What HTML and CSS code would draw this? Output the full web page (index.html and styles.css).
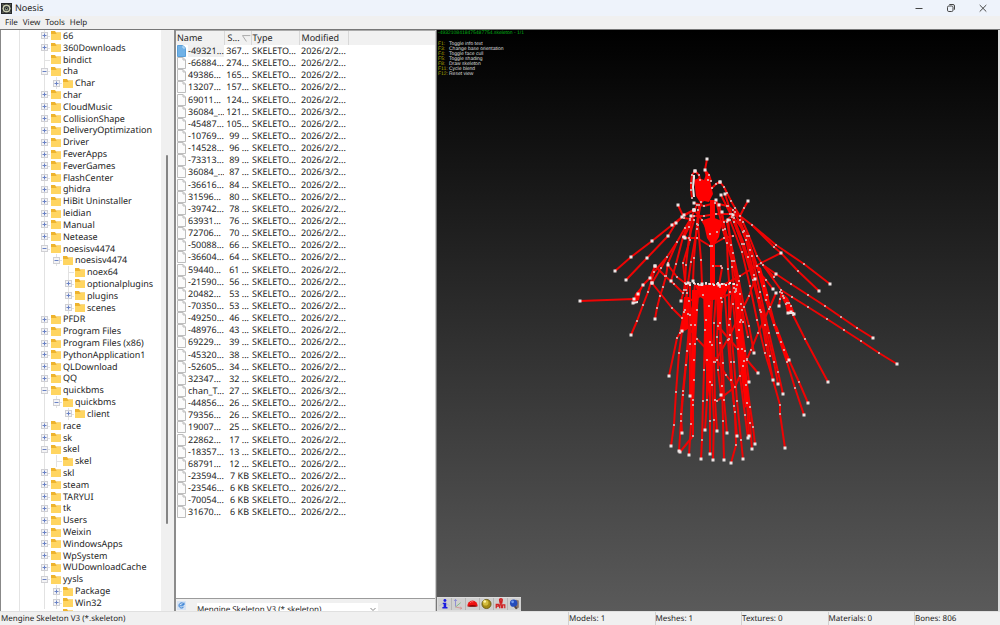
FILE: index.html
```html
<!DOCTYPE html>
<html lang="en">
<head>
<meta charset="utf-8">
<title>Noesis</title>
<link rel="stylesheet" href="styles.css">
</head>
<body>
<div class="window">
  <header class="titlebar">
    <svg class="app-icon" viewBox="0 0 12 12" aria-hidden="true"><rect width="12" height="12" fill="#25282a"/><path d="M1 2h2M9 2h2M1 10h2M9 10h2M1 6h1M10 6h1" stroke="#77786a"/><circle cx="6" cy="6" r="3.6" fill="#3c4144" stroke="#c9cdb0" stroke-width="1.5"/><circle cx="6" cy="6.5" r="1.7" fill="#9aa58c"/><circle cx="6" cy="6" r=".8" fill="#15181a"/></svg>
    <h1 class="title">Noesis</h1>
    <div class="controls">
      <button class="control" aria-label="Minimize"><svg viewBox="0 0 10 10"><path d="M1.500 5.500h7"/></svg></button>
      <button class="control" aria-label="Restore"><svg viewBox="0 0 10 10"><rect x="1.500" y="3" width="5.500" height="5.500" rx="1.300"/><path d="M3.300 1.500h3.700q1.500 0 1.500 1.500v3.700"/></svg></button>
      <button class="control" aria-label="Close"><svg viewBox="0 0 10 10"><path d="M1.700 2l6.600 6.600M8.300 2l-6.600 6.600"/></svg></button>
    </div>
  </header>
  <nav class="menu"><button>File</button><button>View</button><button>Tools</button><button>Help</button></nav>
  <main class="panes">
    <section class="folders">
      <ul class="tree" id="tree"></ul>
      <div class="scroll"><div class="thumb"></div></div>
    </section>
    <section class="files">
      <div class="list">
        <table class="table">
          <thead><tr><th class="c-name">Name</th><th class="c-size"><span class="sort">S...<svg viewBox="0 0 9 7"><path d="M8.500 .5h-8l4 6" /></svg></span></th><th class="c-type">Type</th><th class="c-date">Modified</th><th></th></tr></thead>
          <tbody id="rows"></tbody>
        </table>
      </div>
      <div class="filter">
        <button class="refresh" aria-label="Refresh"><svg viewBox="0 0 9 9"><path d="M6.800 5.800A2.600 2.600 0 1 1 7 3.500M7 1.500v2.200H4.500M2.500 4.800h4" /></svg></button>
        <select class="combo" aria-label="File type"><option>Mengine Skeleton V3 (*.skeleton)</option></select>
        <svg class="chevron" viewBox="0 0 6 6" aria-hidden="true"><path d="M.5 2l2.500 2.500L5.500 2"/></svg>
      </div>
    </section>
    <section class="view">
      <svg class="skeleton" id="skeleton" viewBox="437 30 561 581" role="img" aria-label="Skeleton preview"></svg>
      <div class="overlay">
        <p class="file">-4932108418475487754.skeleton - 1/1</p>
        <dl class="keys">
          <dt>F1:</dt><dd>Toggle info text</dd>
          <dt>F3:</dt><dd>Change base orientation</dd>
          <dt>F4:</dt><dd>Toggle face cull</dd>
          <dt>F5:</dt><dd>Toggle shading</dd>
          <dt>F8:</dt><dd>Draw skeleton</dd>
          <dt>F11:</dt><dd>Cycle blend</dd>
          <dt>F12:</dt><dd>Reset view</dd>
        </dl>
      </div>
      <div class="tools">
        <button aria-label="Info"><svg viewBox="0 0 14 14"><path d="M1 9q6-5 12 0" fill="none" stroke="#b5b8c5"/><g fill="#1c1ce0"><circle cx="7.500" cy="3" r="1.700"/><path d="M5 5.500h4v5h1.500v1.800h-6v-1.800h1.500v-3.500H5z"/></g></svg></button>
        <button aria-label="Axes"><svg viewBox="0 0 14 14" fill="none"><path d="M3.500 10V2M2 3.500L3.500 1.500 5 3.500" stroke="#8585d4"/><path d="M3.500 10.500l6-5" stroke="#77b878"/><path d="M3.500 10.500l7 1.500M9 10.500l2 1.500-2 1" stroke="#d49090"/></svg></button>
        <button aria-label="Culling"><svg viewBox="0 0 14 14"><path d="M1 9.500a6 6.500 0 0 1 12 0z" fill="#ed1111"/><path d="M1 9.500q6 1.500 12 0-6-2-12 0z" fill="#730000"/><path d="M4 5.500q2-2 4-1" stroke="#ff8080" fill="none"/></svg></button>
        <button aria-label="Shading"><svg viewBox="0 0 14 14"><circle cx="7" cy="7" r="5.300" fill="#a58b16" stroke="#655610"/><circle cx="6" cy="5.500" r="3.300" fill="#d4bd3e"/><circle cx="5" cy="4" r="1.500" fill="#fff3a8"/></svg></button>
        <button aria-label="Bones"><svg viewBox="0 0 14 14"><path d="M7.500 1v7M5.800 2q0-1.300 1.700-1.300T9.200 2L8.500 6h-2zM2 12V7.500h2.500v2H2M6 12V8h2v4M9.500 12V8h2.500v4" fill="none" stroke="#cf2022" stroke-width="1.400"/></svg></button>
        <button aria-label="Blend"><svg viewBox="0 0 14 14"><path d="M9 2l3 1v8l-3 2-3-3z" fill="#8b7467"/><circle cx="6" cy="6" r="4.300" fill="#254cbb"/><circle cx="4.800" cy="4.500" r="1.600" fill="#739ced"/><path d="M7.500 10l2 2.500" stroke="#554740" stroke-width="2"/></svg></button>
      </div>
    </section>
  </main>
  <footer class="status"><span>Mengine Skeleton V3 (*.skeleton)</span><span>Models: 1</span><span>Meshes: 1</span><span>Textures: 0</span><span>Materials: 0</span><span>Bones: 806</span></footer>
</div>
<script src="script.js"></script>
</body>
</html>
```
FILE: styles.css
```css
* { box-sizing: border-box; }
body { margin: 0; font: 9px/12px "Noto Sans", "Open Sans", sans-serif; color: #242424; text-rendering: geometricPrecision; }
button, select { font: inherit; color: inherit; border: 0; padding: 0; margin: 0; background: none; text-rendering: inherit; }
.window { display: flex; flex-direction: column; height: 100vh; background: #f0f0f0; overflow: hidden; }
.titlebar { display: flex; align-items: center; height: 16px; flex: none; background: #eef3fb; padding-left: 1px; }
.app-icon { width: 11px; height: 11px; }
.title { flex: 1; margin: 0 0 0 3px; font-size: 9px; font-weight: 400; }
.controls { display: flex; padding-right: 1px; }
.control { width: 32px; height: 15px; display: grid; place-items: center; }
.control svg { width: 10px; height: 10px; fill: none; stroke: #454545; }
.menu { display: flex; gap: 5px; flex: none; height: 13px; padding-left: 5px; font-size: 8px; }
.panes { flex: 1; min-height: 0; display: grid; grid-template-columns: 17.4% 26.2% 1fr; border-top: 1px solid #777; }
.folders { display: flex; min-height: 0; background: linear-gradient(90deg, transparent 18px, #e4e4e4 18px, #e4e4e4 19px, transparent 19px) #fff; border-left: 1px solid #888; border-right: 6px solid #f0f0f0; overflow: hidden; }
.tree { flex: 1; min-width: 0; min-height: 0; margin: 0; padding: 0 0 0 37px; list-style: none; display: flex; flex-direction: column; }
.node { flex: 1 1 0; min-height: 0; display: flex; align-items: center; white-space: nowrap; }
.node.cut { flex: 0 0 2px; overflow: hidden; align-items: flex-start; }
.cell { width: 12px; align-self: stretch; flex: none; display: grid; place-items: center; position: relative; }
.line { background: linear-gradient(90deg, transparent 6px, #e2e2e2 6px, #e2e2e2 7px, transparent 7px); }
.cell.branch::after { content: ""; position: absolute; left: 6px; right: 0; top: 50%; border-top: 1px solid #e2e2e2; }
.toggle { position: relative; z-index: 1; width: 7px; height: 7px; display: block; }
.toggle svg { display: block; width: 7px; height: 7px; }
.folder { width: 10px; height: 9px; flex: none; margin: 0 2px 0 1px; }
.scroll { width: 7px; background: #f0f0f0; padding-left: 5px; display: grid; grid-template-rows: 21.5% 63.5% 1fr; }
.thumb { grid-row: 2; background: #858585; border-radius: 1px; }
.files { display: flex; flex-direction: column; min-height: 0; min-width: 0; border-left: 2px solid #8c8c8c; border-right: 1px solid #ccc; background: #fff; }
.list { flex: 1; min-height: 0; border-top: 1px solid #aaa; border-bottom: 1px solid #9b9b9b; }
.table { width: 100%; height: 86%; border-collapse: collapse; table-layout: fixed; }
.table th, .table td { padding: 0; font-weight: 400; text-align: left; line-height: 12px; white-space: nowrap; overflow: hidden; }
.table th { height: 14px; background: #f1f1f1; border-right: 1px solid #d8d8d8; padding-left: 1px; }
.table th:last-child { border: 0; }
.c-name { width: 48px; } .c-size { width: 27px; } .c-type { width: 48px; } .c-date { width: 49px; }
.table th.c-size { padding-left: 3px; }
.table th.c-type, .table td.type { padding-left: 1px; }
.table td.date, .table th.c-date { padding-left: 2px; }
.table td.size { text-align: right; padding-right: 2px; }
.sort { display: flex; gap: 2px; align-items: center; }
.sort svg { width: 9px; height: 7px; fill: none; stroke: #aaa; }
.name { display: flex; align-items: center; }
.doc { width: 9px; height: 12px; flex: none; margin: 0 2px 0 1px; }
.current .name span { background: #f0f0f0; flex: 1; }
.filter { flex: none; height: 12px; overflow: hidden; background: #f0f0f0; display: flex; align-items: flex-start; padding-left: 1px; }
.refresh { width: 9px; height: 9px; background: #d6e3f4; margin-top: 2px; }
.refresh svg { display: block; fill: none; stroke: #347fd4; }
.combo { appearance: none; width: 181px; height: 14px; font-size: 8px; line-height: 12px; margin: 4px 0 0 11px; padding: 0; background: #fff; }
.chevron { width: 6px; height: 6px; margin: 7px 0 0 -8px; fill: none; stroke: #888; }
.view { position: relative; min-width: 0; min-height: 0; overflow: hidden; border-left: 1px solid #777; border-right: 2px solid #ddd; background: linear-gradient(#000, #5a5a5a); }
.skeleton { display: block; width: 100%; height: 100%; }
.bones { fill: none; stroke: #ee0404; stroke-width: 2; stroke-linejoin: round; }
.mass { fill: #f00; }
.joints { fill: #ece4e4; }
.joints .soft { fill: #dc9c9c; }
.overlay { position: absolute; left: 1px; top: 1px; font: 5px/5px "Liberation Sans", Arial, sans-serif; color: #ddd; }
.file { margin: 0 0 6px; color: #00b414; }
.keys { margin: 0; display: grid; grid-template-columns: 11px auto; }
.keys dt { color: #b4ad00; }
.keys dd { margin: 0; }
.tools { position: absolute; left: 0; bottom: 0; display: flex; border: 1px solid #ddd; border-right: 0; background: #b5b5b5; gap: 1px; }
.tools button { width: 13px; height: 12px; background: #d0d0d0; }
.tools svg { display: block; width: 13px; height: 12px; }
.status { flex: none; height: 14px; display: grid; grid-template-columns: 56.8% repeat(5, 8.65%); align-items: center; border-top: 1px solid #e0e0e0; white-space: nowrap; font-size: 8px; }
.status span { line-height: 13px; padding-left: 1px; }
.status span + span { border-left: 1px solid #d0d0d0; padding-left: 0; }
```
FILE: script.js
```js
// Each folder: depth, state (+ closed, - open, . leaf), name.
const folders = `0+66|0+360Downloads|0.bindict|0-cha|1+Char|0+char|0+CloudMusic|0+CollisionShape|0+DeliveryOptimization|0+Driver|0+FeverApps|0+FeverGames|0+FlashCenter|0+ghidra|0+HiBit Uninstaller|0+leidian|0+Manual|0+Netease|0-noesisv4474|1-noesisv4474|2.noex64|2+optionalplugins|2+plugins|2+scenes|0+PFDR|0+Program Files|0+Program Files (x86)|0+PythonApplication1|0+QLDownload|0+QQ|0-quickbms|1-quickbms|2+client|0+race|0+sk|0-skel|1.skel|0+skl|0+steam|0+TARYUI|0+tk|0+Users|0+Weixin|0+WindowsApps|0+WpSystem|0+WUDownloadCache|0-yysls|1+Package|1+Win32`.split("|");
const folderIcon = '<svg class="folder" viewBox="0 0 10 9"><path d="M0 0h4l1 1.500h5V9H0z" fill="#eeb32d"/><path d="M0 3h5l1-1.200h4V9H0z" fill="#ffd561"/></svg>';
document.getElementById("tree").innerHTML = folders.map(f => {
  const depth = +f[0], state = f[1], name = f.slice(2);
  let cells = "";
  for (let i = 0; i < depth; i++) cells += `<span class="cell ${i === 0 ? "line" : ""}"></span>`;
  const button = state === "." ? "" : `<button class="toggle" aria-label="${state === "+" ? "Expand" : "Collapse"} ${name}"><svg viewBox="0 0 7 7"><rect x=".5" y=".5" width="6" height="6" fill="#f4f4f6" stroke="#d0d0d4"/><path d="M1.500 3.500h4${state === "+" ? "M3.500 1.500v4" : ""}" stroke="#6a82c4"/></svg></button>`;
  return `<li class="node">${cells}<span class="cell line branch">${button}</span>${folderIcon}<span>${name}</span></li>`;
}).join("") + `<li class="node cut"><span class="cell"></span><span class="cell"></span>${folderIcon}</li>`;

const files = `-49321...,367...|-66884...,274...|49386...,165...|13207...,157...|69011...,124...|36084_...,121...|-45487...,105...|-10769...,99 ...|-14528...,96 ...|-73313...,89 ...|36084_...,87 ...|-36616...,84 ...|31596...,80 ...|-39742...,78 ...|63931...,76 ...|72706...,70 ...|-50088...,66 ...|-36604...,64 ...|59440...,61 ...|-21590...,56 ...|20482...,53 ...|-70350...,53 ...|-49250...,46 ...|-48976...,43 ...|69229...,39 ...|-45320...,38 ...|-52605...,34 ...|32347...,32 ...|chan_T...,27 ...|-44856...,26 ...|79356...,26 ...|19007...,25 ...|22862...,17 ...|-18357...,13 ...|68791...,12 ...|-23594...,7 KB|-23546...,6 KB|-70054...,6 KB|31670...,6 KB`.split("|");
document.getElementById("rows").innerHTML = files.map((f, i) => {
  const [name, size] = f.split(",");
  const march = name === "36084_..." || name === "chan_T...";
  return `<tr class="${i ? "" : "current"}"><td><div class="name"><svg class="doc" viewBox="0 0 9 12"><path d="M.5 .5h5.500l2.500 2.500v8.500h-8z" fill="${i ? "#fbfbfb" : "#6fb1e6"}" stroke="${i ? "#bdbdbd" : "#5a9fd8"}"/><path d="M6 .5v2.500h2.500" fill="none" stroke="${i ? "#bdbdbd" : "#c3e0f7"}"/></svg><span>${name}</span></div></td><td class="size">${size}</td><td class="type">SKELETO...</td><td class="date">2026/${march ? 3 : 2}/2...</td><td></td></tr>`;
}).join("");

// Bone chains; every vertex is a joint.
const chains = `
580,301 634,299 633,303 638,294 643,285 650,278 655,266
615,271 631,257 652,241 672,225 682,217 694,210
626,280 647,258 668,236 676,223 684,215 694,210
678,205 684,218 690,219
707,159 705,170 708,180
695,171 692,175 691,183 691,190 692,198
695,171 699,175 700,180
705,170 709,175 711,181
720,182 716,184 712,188
720,182 724,187 727,193 731,201 735,208 740,216 743,222 749,236 757,256
748,201 744,208 740,216
631,335 637,321 643,305 648,292 654,272 667,257 677,242 685,228 690,220 697,205
655,319 657,308 660,296 663,287 666,276 668,263 677,242
655,266 665,276 674,284 683,293
652,283 672,308 682,318 697,339 717,360 726,375 735,387
668,265 677,277 685,283
671,281 676,264 683,237 690,220
652,283 661,268 667,257
830,284 804,264 776,245 752,225 740,216 728,206
819,291 798,271 781,253 774,247 752,225
873,338 857,328 841,317 825,306 808,295 791,284 776,274 763,265 757,256
897,364 879,353 861,341 844,330 827,319 808,307 792,297 781,290 763,265
781,253 761,263 740,276 720,287
773,289 766,280 759,272 750,250
779,306 780,299 782,293
776,274 774,277 763,265
828,382 805,339 793,315 787,303 780,292
788,313 786,304 780,292
791,312 789,303 783,296
794,314 791,306 784,298
776,293 770,307 758,333 751,350 747,359 735,387 717,401
755,279 749,296 742,310 730,335 715,362
754,353 749,326 744,307 739,281 733,253 727,222
758,373 747,360 738,349 729,339 718,326
785,448 780,414 780,405 773,380 766,345 760,310 754,275 746,240 735,212
804,415 795,388 787,362 777,333 767,295 759,272 747,236 733,210
808,403 799,382 789,360 781,342 774,325 766,300 757,266 743,232
783,394 778,372 769,333 760,292 752,256 740,220
778,384 774,362 765,325 753,280 744,244 732,214
773,380 765,353 757,320 750,286 742,252 730,220
789,360 784,350 778,333 769,309 764,286
669,376 677,338 680,333 684,312 687,293
671,446 674,425 676,392 679,353 682,331 685,310 688,283
682,433 681,414 683,391 687,351 690,315 690,283
679,451 681,421 683,395 686,365 691,325 695,284
680,452 693,436 693,405 694,380 695,344 697,310 698,284
689,455 691,424 693,400 694,360 695,325 699,285
701,459 702,440 703,401 704,370 705,330 706,284
705,430 707,400 707,360 706,320 709,284
710,454 710,421 710,382 710,342 713,284
713,460 714,420 712,385 712,345 709,306
717,431 715,400 714,362 714,323 717,284
721,395 718,370 717,337 720,285
724,460 723,421 722,386 720,343 722,284
727,433 724,400 723,363 720,323 722,302
731,463 736,445 735,412 731,380 728,340 724,284
737,436 734,406 731,362 729,325 729,284
743,459 741,440 737,401 734,362 730,319 733,284
748,438 745,415 740,376 737,338 733,304 733,284
749,436 747,403 743,366 739,330 735,292
752,449 750,423 746,385 742,349 738,308 734,284
755,444 753,427 750,407 744,361 740,322 736,289
749,382 745,351 741,320 737,285
690,396 690,344 690,315 700,285
682,331 688,314 689,301 703,295 721,298 736,291
681,301 684,290 685,283 686,265 689,238 694,220
688,283 691,262 697,229 698,210
693,281 694,258 697,224 701,202
702,284 701,260 698,225 699,205
719,285 722,268 721,266 713,266
684,237 689,227 694,216 704,216 716,214 730,214 740,216
685,238 697,238 710,246 724,238 733,236
694,210 702,220 710,234 712,246
733,215 724,222 717,232 712,246
694,203 704,206 715,203 727,206 734,218 744,231
691,216 690,240 683,263 686,290
728,220 731,245 732,267 734,288
722,212 727,243 728,269 730,292
719,205 725,229 734,261 740,294 743,322
716,200 723,230 732,261 741,304 748,337
725,194 734,222 748,257 759,298 769,333
721,195 732,217 742,244 753,280 761,312 770,356`.trim().split("\n").map(c => c.split(" ").map(p => p.split(",").map(Number)));
const lines = chains.map(c => `<polyline points="${c.map(p => p.join()).join(" ")}"/>`).join("");
const dots = chains.map((c, n) => c.map(([x, y], i) => {
  const tip = i === 0 || n < 3;
  const size = tip ? 3 : 2;
  return `<rect${tip ? "" : ' class="soft"'} x="${x - size / 2}" y="${y - size / 2}" width="${size}" height="${size}"/>`;
}).join("")).join("");
let belt = "";
for (let x = 685; x <= 734; x += 4) belt += `<rect x="${x}" y="${282 + x % 3}" width="2" height="2"/>`;
document.getElementById("skeleton").innerHTML =
  `<g class="bones">${lines}</g>
   <path class="mass" d="M694 180l5-2 5 2 3-9 3 9 3 14-4 8-5-1-3 3-5-8zM703 220l9-3 10 4-3 16-6 10-6-9zM710 200h5v90h-5zM695 285h35l-5 9-5 5-14 2-7-5zM684 297h6l-2 32-7 4zM692 290h6l-3 70-3 60h-2l1-60zM703 290h8l1 90-3 20-4-40zM716 290h6l-2 40h-3zM733 284h5l6 60 5 60-4 4-7-60zM633 303l2-9 7-8-3 14zM782 293l6 5 6 15-5 1zM757 265l4 3 8 29-4 5zM774 325l3 1 13 34-3 2z"/>
   <g class="joints">${dots}${belt}<path d="M693 175h2v3l-1 9 1 10h-2l-1-10zM633 302l5-1v2l-5 1zM788 312h6v2h-6z"/></g>`;
```
